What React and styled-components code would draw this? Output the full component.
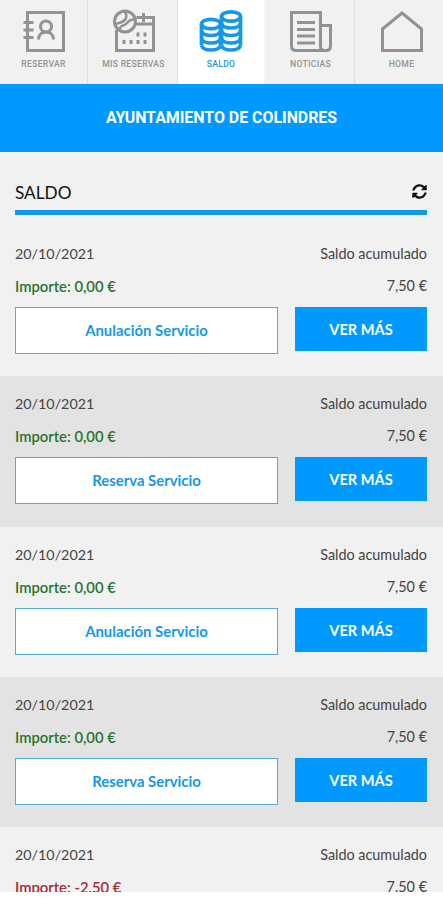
import React from 'react'
import styled, { createGlobalStyle, ThemeProvider } from 'styled-components'
import { FaSyncAlt } from 'react-icons/fa'

const theme = {
  blue: '#0099ff',
  line: '#1598ea',
  grey: '#929292',
  light: '#f1f1f1',
  dark: '#e3e3e3',
  green: '#26742b',
  red: '#a52a32',
}

const GlobalStyle = createGlobalStyle`
  * {
    box-sizing: border-box;
  }

  body {
    margin: 0;
    background: #fff;
    font-family: Lato, 'Liberation Sans', sans-serif;
  }
`

const Screen = styled.div`
  height: 892px;
  overflow: hidden;
  background: ${props => props.theme.light};
`

const Tabs = styled.nav`
  display: grid;
  grid-template-columns: 88px 90px 87px 90px 88px;
  height: 84px;
`

const Tab = styled.a`
  display: flex;
  flex-direction: column;
  align-items: center;
  padding-top: 9px;
  border-right: 1px solid ${props => (props.$active ? '#f6f6f6' : '#dedede')};
  background: ${props => (props.$active ? '#fff' : 'transparent')};
  color: ${props => (props.$active ? props.theme.line : props.theme.grey)};

  &:nth-child(2),
  &:nth-child(4) {
    padding-left: 2px;
  }

  &:last-child {
    border-right: 0;
    padding-left: 5px;
  }

  & > svg {
    display: block;
    fill: none;
    stroke: currentColor;
    stroke-width: 3;
  }
`

const TabLabel = styled.span`
  margin-top: 5px;
  font: 500 8.6px/12px Roboto, sans-serif;
  letter-spacing: 0.3px;
  white-space: nowrap;
`

const Banner = styled.h1`
  display: flex;
  align-items: center;
  justify-content: center;
  height: 68px;
  margin: 0;
  padding-bottom: 1px;
  background: ${props => props.theme.blue};
  color: #fff;
  font: 700 15.9px/20px Roboto, sans-serif;
`

const Heading = styled.div`
  display: flex;
  align-items: center;
  justify-content: space-between;
  height: 63px;
  margin: 0 16px 11px 15px;
  padding-top: 21px;
  border-bottom: 5px solid ${props => props.theme.line};
  color: #111;
`

const Title = styled.h2`
  margin: 0;
  padding-top: 2px;
  font-size: 17.2px;
  font-weight: 400;
  line-height: 24px;
`

const Row = styled.section`
  height: 150.3px;
  padding: 12px 16px 0 15px;
  background: ${props => (props.$shaded ? props.theme.dark : props.theme.light)};
`

const Line = styled.div`
  display: flex;
  justify-content: space-between;
  color: #444;
  font-size: 14.4px;
  line-height: 32px;
`

const Day = styled.span`
  font-size: 14.3px;
`

const Amount = styled.span`
  color: ${props => (props.$negative ? props.theme.red : props.theme.green)};
  font-size: 14.8px;
  font-weight: 600;
`

const Actions = styled.div`
  display: flex;
  gap: 17px;
  align-items: flex-start;
  margin-top: 5px;
`

const Service = styled.div`
  width: 263px;
  height: 47px;
  border: 1px solid #55acd3;
  background: #fff;
  color: ${props => props.theme.line};
  font-size: 14.9px;
  font-weight: 700;
  line-height: 45px;
  text-align: center;
`

const MoreButton = styled.button`
  flex: 1;
  height: 44px;
  padding: 1px 0 0;
  border: 0;
  background: ${props => props.theme.blue};
  color: #fff;
  font: 700 14.6px/43px Lato, sans-serif;
`

const ContactsIcon = () => (
  <svg width="44" height="44" viewBox="0 0 44 44">
    <path d="M5.5 3.5h36v38h-36zM1.5 13.5h10M1.5 21h10M1.5 28.5h10" />
    <circle cx="24" cy="17.5" r="5.5" />
    <path d="M16.5 30.5c0-10 15-10 15 0" />
  </svg>
)

const CalendarIcon = () => (
  <svg width="44" height="44" viewBox="0 0 44 44">
    <path d="M4.5 21v20.5h37V8.5H24.5M24 15h17M31.5 4v9" />
    <circle cx="13" cy="12.5" r="10.5" />
    <path
      d="M3 16C5 12.5 12 15 14 9c.8-2.500.5-4.500-2-6.500M8 21.500C7 15 12 18 15 14c2-2.500 5-4.500 8.500-3"
      strokeWidth="2.5"
    />
    <path
      d="M24.5 25.5h3M31.5 25.5h3M10.500 33h3M17.500 33h3M24.500 33h3M31.500 33h3"
      strokeWidth="4"
    />
  </svg>
)

const CoinsIcon = () => (
  <svg width="44" height="44" viewBox="0 0 44 44">
    <g strokeWidth="3.7">
      <ellipse cx="32" cy="7.5" rx="9.5" ry="4.7" />
      <ellipse cx="12" cy="15" rx="9.5" ry="4.7" />
      <path d="M22.5 7.5v29M41.5 7.5v29M2.5 15v21.500M21.500 15v21.500" />
      <path d="M22.5 14.5c2 6 17 6 19 0M22.5 22c2 6 17 6 19 0M22.5 29.5c2 6 17 6 19 0M22.5 36.5c2 6 17 6 19 0" />
      <path d="M2.5 22c2 6 17 6 19 0M2.5 29.5c2 6 17 6 19 0M2.5 36.5c2 6 17 6 19 0" />
    </g>
  </svg>
)

const NewsIcon = () => (
  <svg width="44" height="44" viewBox="0 0 44 44">
    <path d="M31.5 16V3.5H2.5V37q0 4.500 4.500 4.500h30q4.500 0 4.500-4.500V16.500h-10V37q0 4.500 4 4.500" />
    <path d="M8 13.5h18M8 20.5h18M8 27h18M8 34h18" />
  </svg>
)

const HomeIcon = () => (
  <svg width="44" height="44" viewBox="0 0 44 44">
    <path d="M2.5 20 22 4 41.5 20v21.500h-39z" />
  </svg>
)

const tabs = [
  { label: 'RESERVAR', Icon: ContactsIcon },
  { label: 'MIS RESERVAS', Icon: CalendarIcon },
  { label: 'SALDO', Icon: CoinsIcon, active: true },
  { label: 'NOTICIAS', Icon: NewsIcon },
  { label: 'HOME', Icon: HomeIcon },
]

const movements = [
  { amount: '0,00 €', service: 'Anulación Servicio', balance: '7,50 €' },
  { amount: '0,00 €', service: 'Reserva Servicio', balance: '7,50 €' },
  { amount: '0,00 €', service: 'Anulación Servicio', balance: '7,50 €' },
  { amount: '0,00 €', service: 'Reserva Servicio', balance: '7,50 €' },
  { amount: '-2.50 €', service: 'Reserva Servicio', balance: '7.50 €', negative: true },
]

const Movement = ({ amount, service, balance, negative, shaded }) => (
  <Row $shaded={shaded}>
    <Line>
      <Day>20/10/2021</Day>
      <span>Saldo acumulado</span>
    </Line>
    <Line>
      <Amount $negative={negative}>Importe: {amount}</Amount>
      <span>{balance}</span>
    </Line>
    <Actions>
      <Service>{service}</Service>
      <MoreButton>VER MÁS</MoreButton>
    </Actions>
  </Row>
)

const App = () => (
  <ThemeProvider theme={theme}>
    <GlobalStyle />
    <Screen>
      <Tabs>
        {tabs.map(({ label, Icon, active }) => (
          <Tab key={label} $active={active}>
            <Icon />
            <TabLabel>{label}</TabLabel>
          </Tab>
        ))}
      </Tabs>
      <Banner>AYUNTAMIENTO DE COLINDRES</Banner>
      <Heading>
        <Title>SALDO</Title>
        <FaSyncAlt size={15} />
      </Heading>
      {movements.map((movement, i) => (
        <Movement key={i} {...movement} shaded={i % 2 === 1} />
      ))}
    </Screen>
  </ThemeProvider>
)

export default App
